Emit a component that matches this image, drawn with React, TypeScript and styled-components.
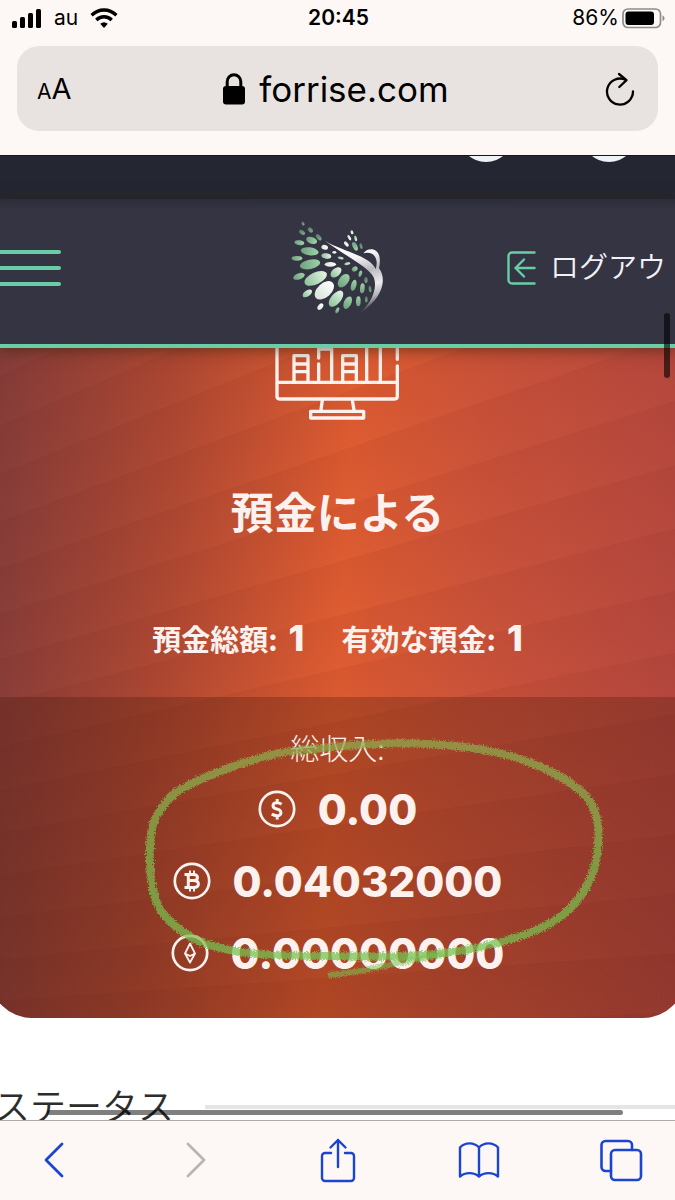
import React from "react";
import styled, { createGlobalStyle } from "styled-components";

const uiFont = `Inter, "Noto Sans CJK JP", sans-serif`;
const jpFont = `"Noto Sans CJK JP", "Noto Sans", sans-serif`;
const mint = "#69cda6";
const cream = "#fdf8f5";
const paper = "#fbf2ef";
const linkBlue = "#1c45cf";

const GlobalStyle = createGlobalStyle`
  * { box-sizing: border-box; }
  body { margin: 0; background: ${cream}; font-family: ${uiFont}; }
  button { appearance: none; border: 0; padding: 0; background: none; color: inherit; font: inherit; display: flex; align-items: center; justify-content: center; }
  svg { display: block; flex: none; }
`;

const Screen = styled.div`
  display: flex;
  flex-direction: column;
  height: 100vh;
  overflow: hidden;
  background: ${cream};
  color: #000;
`;

/* ---------- browser chrome, top ---------- */

const StatusBar = styled.header`
  display: grid;
  grid-template-columns: 1fr auto 1fr;
  align-items: center;
  height: 36px;
  padding: 0 10px 0 12px;
  font-size: 21px;
  line-height: 36px;
`;

const StatusGroup = styled.div<{ $end?: boolean; $gap: number }>`
  display: flex;
  align-items: center;
  gap: ${(p) => p.$gap}px;
  justify-content: ${(p) => (p.$end ? "flex-end" : "flex-start")};
`;

const Clock = styled.time`
  font-weight: 600;
`;

const AddressBar = styled.div`
  display: grid;
  grid-template-columns: 1fr auto 1fr;
  align-items: center;
  height: 85px;
  margin: 10px 17px 24px;
  padding: 0 23px 0 20px;
  border-radius: 22px;
  background: #e8e3e0;
`;

const TextSizeButton = styled.button`
  justify-self: start;
  && { align-items: baseline; }
  padding-top: 4px;
  line-height: 40px;
`;

const Letter = styled.span<{ $size: number }>`
  font-size: ${(p) => p.$size}px;
`;

const Domain = styled.div`
  display: flex;
  align-items: center;
  gap: 14px;
  font-size: 35px;
  line-height: 48px;
`;

const ReloadButton = styled.button`
  && { justify-self: end; }
`;

/* ---------- web page ---------- */

const Viewport = styled.main`
  position: relative;
  flex: 1;
  min-height: 0;
  overflow: hidden;
  background: #fff;
`;

const TopStrip = styled.div`
  display: flex;
  justify-content: flex-end;
  align-items: flex-start;
  gap: 69px;
  height: 44px;
  padding-right: 39px;
  overflow: hidden;
  background: linear-gradient(#242631 75%, #272733);
  border-top: 1px solid #14161d;
`;

const RoundLink = styled.a`
  width: 54px;
  height: 54px;
  margin-top: -48px;
  border-radius: 50%;
  background: #eef3f6;
`;

const NavBar = styled.nav`
  position: relative;
  z-index: 1;
  display: grid;
  grid-template-columns: 1fr auto 1fr;
  align-items: center;
  height: 149px;
  padding-bottom: 8px;
  border-bottom: 4px solid ${mint};
  background: linear-gradient(#2b2c39, #343443 10px);
  box-shadow: 0 2px 14px rgba(40, 30, 10, 0.55);
`;

const MenuButton = styled.button`
  justify-self: start;
  && { flex-direction: column; align-items: flex-start; }
  gap: 12px;
`;

const MenuLine = styled.span`
  width: 61px;
  height: 4px;
  border-radius: 0 2px 2px 0;
  background: ${mint};
`;

const LogoutLink = styled.a`
  justify-self: end;
  display: flex;
  align-items: center;
  gap: 14px;
  margin-right: -20px;
  color: #f1f1f6;
  font-family: ${jpFont};
  font-size: 29px;
  font-weight: 350;
  line-height: 40px;
  text-decoration: none;
  white-space: nowrap;
`;

const LogoutText = styled.span`
  padding-bottom: 5px;
`;

const Card = styled.section`
  margin: 0 -10px;
  overflow: hidden;
  border-radius: 0 0 42px 42px;
  color: ${paper};
  font-family: ${jpFont};
  background:
    repeating-conic-gradient(from 62deg at -1567px 763px, rgba(90, 10, 10, 0.06) 0deg, rgba(90, 10, 10, 0) 1.5deg),
    linear-gradient(93deg, #833c3a 0%, #ad4833 25%, #de5c31 50%, #c9523a 70%, #b2463f 100%);
`;

const CardTop = styled.div`
  display: flex;
  flex-direction: column;
  align-items: center;
  padding-bottom: 35px;
`;

const CardTitle = styled.h1`
  margin: 60px 0 0;
  font-size: 43px;
  font-weight: 700;
  line-height: 60px;
`;

const Stats = styled.dl`
  display: flex;
  gap: 37px;
  margin: 74px 0 0;
  line-height: 48px;
`;

const Stat = styled.div`
  display: flex;
  align-items: baseline;
  gap: 11px;
`;

const StatLabel = styled.dt`
  font-size: 29px;
  font-weight: 700;
`;

const StatValue = styled.dd`
  margin: 0;
  font-family: ${uiFont};
  font-size: 36px;
  font-weight: 800;
`;

const Income = styled.div`
  position: relative;
  padding: 30px 0 29px;
  background: rgba(65, 20, 8, 0.28);
  text-align: center;
`;

const IncomeLabel = styled.h2`
  margin: 0 0 6px;
  font-size: 29px;
  font-weight: 300;
  line-height: 40px;
`;

const IncomeList = styled.ul`
  margin: 0;
  padding: 0;
  list-style: none;
`;

const IncomeRow = styled.li`
  display: flex;
  align-items: center;
  justify-content: center;
  gap: 22px;
  height: 72px;
  font-family: ${uiFont};
  font-size: 42px;
  font-weight: 800;
`;

const PencilMark = styled.svg`
  position: absolute;
  top: 33px;
  left: calc(50% - 207px);
  pointer-events: none;
`;

const StatusHeading = styled.h2`
  display: flex;
  align-items: flex-end;
  gap: 31px;
  margin: 58px 0 0 -6px;
  color: #2d2d2d;
  font-family: ${jpFont};
  font-size: 36px;
  font-weight: 350;
  line-height: 56px;
  white-space: nowrap;

  &::after {
    content: "";
    flex: 1;
    height: 4px;
    margin-bottom: 23px;
    background: #e5e5e5;
  }
`;

const VerticalThumb = styled.div`
  position: absolute;
  z-index: 2;
  top: 158px;
  right: 5px;
  width: 6px;
  height: 65px;
  border-radius: 3px;
  background: rgba(0, 0, 0, 0.6);
`;

const HorizontalThumb = styled.div`
  position: absolute;
  bottom: 5px;
  left: 7%;
  right: 52px;
  height: 5px;
  border-radius: 3px;
  background: rgba(0, 0, 0, 0.5);
`;

/* ---------- browser chrome, bottom ---------- */

const Toolbar = styled.footer`
  display: flex;
  align-items: center;
  justify-content: space-between;
  height: 80px;
  padding: 0 32px 2px;
  border-top: 1px solid #aeaaa8;
  background: ${cream};
`;

const ToolButton = styled.button`
  width: 44px;
  height: 48px;
  color: ${linkBlue};
  &:disabled { color: #b9b5b3; }
`;

/* ---------- drawings ---------- */

const SignalIcon = () => (
  <svg width="30" height="19" viewBox="0 0 30 19">
    <rect x="0" y="12" width="5" height="7" rx="1.5" />
    <rect x="8" y="8" width="5" height="11" rx="1.5" />
    <rect x="16" y="4" width="5" height="15" rx="1.5" />
    <rect x="24" y="0" width="5" height="19" rx="1.5" />
  </svg>
);

const WifiIcon = () => (
  <svg width="28" height="20" viewBox="0 0 28 20" fill="none" stroke="#000" strokeWidth="3.4">
    <path d="M1.6 7.2Q7 2 14 2t12.400 5.200" />
    <path d="M6.300 12Q9.500 8.800 14 8.800T21.700 12" />
    <path d="M14 20l-3.800-4.200Q14 12.600 17.800 15.800Z" fill="#000" stroke="none" />
  </svg>
);

const BatteryIcon = () => (
  <svg width="43" height="21" viewBox="0 0 43 21">
    <rect x="1" y="1" width="37.500" height="18.500" rx="5" fill="none" stroke="#8f8b89" strokeWidth="1.700" />
    <rect x="3.500" y="3.500" width="28.500" height="13.500" rx="3" />
    <path d="M40.500 7.200q2 1 2 3t-2 3z" fill="#8f8b89" />
  </svg>
);

const LockIcon = () => (
  <svg width="22" height="32" viewBox="0 0 22 32">
    <rect x="0" y="13" width="22" height="18.500" rx="3" />
    <path d="M4.200 15V8.500a6.800 6.800 0 0 1 13.600 0V15" fill="none" stroke="#000" strokeWidth="3" />
  </svg>
);

const ReloadIcon = () => (
  <svg width="30" height="34" viewBox="0 0 30 34" fill="none" stroke="#000" strokeWidth="2.300" strokeLinecap="round" strokeLinejoin="round">
    <path d="M28 19.500A13 13 0 1 1 20.500 7.800" />
    <path d="M14 2l7.500 6.200-7.200 6.800" />
  </svg>
);

type Seed = [number, number, number, number, number, string];
const seeds: Seed[] = [
  [98, 71, 6, 4, 60, "d"], [95, 97, 10, 6, 35, "d"], [120, 90, 9, 6, 50, "d"], [145, 112, 11, 6, 50, "d"],
  [87, 128, 15, 7, 10, "g"], [124, 121, 17, 10, 20, "g"], [118, 154, 27, 12, 8, "g"], [80, 175, 16, 7, 0, "g"],
  [163, 142, 10, 7, 15, "w"], [168, 168, 15, 8, 10, "l"], [192, 157, 6, 4, 0, "w"], [180, 193, 17, 7, 0, "w"],
  [211, 174, 9, 4, 10, "l"], [231, 191, 9, 4, -10, "l"], [119, 193, 31, 14, -12, "g"], [86, 229, 18, 9, -20, "g"],
  [136, 235, 36, 18, -25, "l"], [197, 217, 19, 12, -40, "l"], [111, 280, 16, 9, -35, "l"], [162, 271, 34, 21, -42, "w"],
  [220, 242, 23, 14, -52, "g"], [253, 207, 9, 7, -30, "g"], [197, 296, 29, 15, -50, "l"], [150, 320, 11, 7, -50, "w"],
  [201, 331, 9, 5, -65, "g"], [232, 308, 20, 11, -65, "g"], [250, 256, 17, 8, -75, "g"], [270, 221, 10, 5, -75, "g"],
  [264, 304, 15, 7, -88, "g"], [276, 265, 15, 7, -85, "g"], [287, 240, 9, 5, 90, "d"], [288, 298, 9, 4, 90, "d"],
  [299, 267, 10, 4, 85, "d"], [245, 97, 6, 4, 70, "w"], [237, 113, 9, 4, 60, "w"], [228, 132, 9, 5, 50, "w"],
  [254, 139, 14, 7, 65, "g"], [256, 115, 9, 4, 75, "l"], [272, 138, 9, 4, 75, "d"],
];

const BirdLogo = () => (
  <svg width="94" height="93" viewBox="62 63 282 279" role="img" aria-label="ForRise">
    <defs>
      <linearGradient id="g"><stop stopColor="#6f9f80" /><stop offset="1" stopColor="#9ed3a6" /></linearGradient>
      <linearGradient id="l"><stop stopColor="#8ec29a" /><stop offset="1" stopColor="#e4f3e4" /></linearGradient>
      <linearGradient id="w"><stop stopColor="#d5e4d8" /><stop offset="1" stopColor="#fff" /></linearGradient>
      <linearGradient id="d"><stop stopColor="#557a68" /><stop offset="1" stopColor="#7eab8b" /></linearGradient>
      <linearGradient id="body" gradientUnits="userSpaceOnUse" x1="240" y1="120" x2="300" y2="335">
        <stop stopColor="#fff" /><stop offset=".25" stopColor="#f4f4f6" /><stop offset=".45" stopColor="#b9b9c0" />
        <stop offset=".65" stopColor="#ececee" /><stop offset=".8" stopColor="#b5b5bb" /><stop offset="1" stopColor="#343443" />
      </linearGradient>
    </defs>
    {seeds.map(([x, y, rx, ry, turn, tone]) => (
      <ellipse key={`${x}-${y}`} cx={x} cy={y} rx={rx} ry={ry} fill={`url(#${tone})`} transform={`rotate(${turn} ${x} ${y})`} />
    ))}
    <path fill="url(#body)" d="M163 122C195 142 250 156 290 180C303 188 311 197 316 207C320 195 321 182 314 170C306 157 292 156 279 160C286 150 298 145 311 149C330 157 331 180 326 205C349 235 341 292 270 338C310 300 322 258 309 230C294 203 240 176 163 122Z" />
  </svg>
);

const LogoutIcon = () => (
  <svg width="29" height="34" viewBox="0 0 29 34" fill="none" stroke={mint} strokeWidth="2.400" strokeLinecap="round" strokeLinejoin="round">
    <path d="M27.500 1.500H5a3.500 3.500 0 0 0-3.500 3.500v24A3.500 3.500 0 0 0 5 32.500h22.500" />
    <path d="M27.500 17H8.500M17 8.500L8.500 17l8.500 8.500" />
  </svg>
);

const MonitorIcon = () => (
  <svg width="126" height="72" viewBox="104 54 378 216" fill="none" stroke={paper} strokeWidth="10" strokeLinecap="round" strokeLinejoin="round">
    <path d="M110 40V199q0 8 8 8H463q8 0 8-8V108M471 88V40M110 157H471" />
    <path d="M161 157V77H203V157M161 102H203M161 125H203" />
    <path d="M307 157V77H348V157M307 102H348M307 125H348" />
    <path d="M235 40V84M235 102V157M240 57H274V157M379 40V157M420 40V157" />
    <path d="M246 210L242 240M336 210L341 240M211 244H370V264H211Z" />
  </svg>
);

const CoinIcon = ({ children }: { children: React.ReactNode }) => (
  <svg width="38" height="38" viewBox="0 0 38 38" fill="none" stroke={paper} strokeWidth="2.700" strokeLinejoin="round">
    <circle cx="19" cy="19" r="17.200" />
    {children}
  </svg>
);

const Dollar = () => (
  <CoinIcon>
    <path d="M23.600 14.200Q21.500 12.700 19 12.700C13.800 12.700 13.600 18 18.800 19S24.600 25.800 19 25.800Q16 25.800 13.800 24M19.200 9v4M19.200 26v3.500" strokeWidth="3" />
  </CoinIcon>
);

const Bitcoin = () => (
  <CoinIcon>
    <path d="M11.500 12.400H20.500C26 12.400 25.600 18.600 20.500 18.600H16M20.500 18.600C27 18.600 27 25.600 20.800 25.600H11.500M15.300 12.400V25.600" strokeWidth="3" />
    <path d="M17 8.500V12M21 8.500V12M17 26V29.500M21 26V29.500" strokeWidth="2" />
  </CoinIcon>
);

const Ether = () => (
  <CoinIcon>
    <path d="M19 9.500L24 19.500L19 28.500L14 19.500ZM14 19.500L19 22L24 19.500" strokeWidth="1.800" />
  </CoinIcon>
);

const PencilLoop = () => (
  <PencilMark width="490" height="260" viewBox="130 730 490 260" fill="none" strokeLinecap="round" aria-hidden="true">
    <defs>
      <filter id="crayon" x="-5%" y="-5%" width="110%" height="110%">
        <feTurbulence type="fractalNoise" baseFrequency="0.7" numOctaves="2" seed="4" result="noise" />
        <feDisplacementMap in="SourceGraphic" in2="noise" scale="6" xChannelSelector="R" yChannelSelector="G" />
      </filter>
      <linearGradient id="pencil" gradientUnits="userSpaceOnUse" x1="0" y1="740" x2="0" y2="970">
        <stop stopColor="#8faa4d" /><stop offset=".6" stopColor="#7cba4c" /><stop offset="1" stopColor="#76c452" />
      </linearGradient>
    </defs>
    <g filter="url(#crayon)" stroke="url(#pencil)">
      <path opacity=".74" strokeWidth="8" d="M500 942C520 936 540 930 556 919C580 903 596 875 597 845C600 808 590 790 540 767C495 747 445 744 400 743C355 744 325 747 285 752C240 760 195 780 175 792C150 815 148 830 149 862C150 905 160 920 195 940C230 955 270 956 330 956C400 958 450 956 500 942" />
      <path opacity=".55" strokeWidth="6" d="M330 975C370 971 390 963 440 955" />
    </g>
  </PencilMark>
);

const toolStroke = { fill: "none", stroke: "currentColor", strokeLinecap: "round", strokeLinejoin: "round" } as const;

const BackIcon = () => (
  <svg width="20" height="36" viewBox="0 0 20 36" {...toolStroke} strokeWidth="2.800"><path d="M18 2L2 18l16 16" /></svg>
);
const ForwardIcon = () => (
  <svg width="20" height="36" viewBox="0 0 20 36" {...toolStroke} strokeWidth="2.800"><path d="M2 2l16 16L2 34" /></svg>
);
const ShareIcon = () => (
  <svg width="36" height="46" viewBox="0 0 36 46" {...toolStroke} strokeWidth="2.400">
    <path d="M11 16H5a3 3 0 0 0-3 3v22a3 3 0 0 0 3 3h26a3 3 0 0 0 3-3V19a3 3 0 0 0-3-3h-6M18 30V3M10.500 10.500L18 3l7.500 7.500" />
  </svg>
);
const BookIcon = () => (
  <svg width="42" height="38" viewBox="0 0 42 38" {...toolStroke} strokeWidth="2.400">
    <path d="M21 6.500C16 1 7 1 2 6.500V35.500C7 31 16 31 21 35.500C26 31 35 31 40 35.500V6.500C35 1 26 1 21 6.500V35" />
  </svg>
);
const TabsIcon = () => (
  <svg width="44" height="44" viewBox="0 0 44 44" {...toolStroke} strokeWidth="2.600">
    <rect x="12" y="12" width="30" height="30" rx="4" />
    <path d="M12 33H6.500a4 4 0 0 1-4-4V7a4 4 0 0 1 4-4H29a4 4 0 0 1 4 4v5" />
  </svg>
);

const incomes = [
  { icon: <Dollar />, amount: "0.00" },
  { icon: <Bitcoin />, amount: "0.04032000" },
  { icon: <Ether />, amount: "0.00000000" },
];

export default function App() {
  return (
    <Screen>
      <GlobalStyle />
      <StatusBar>
        <StatusGroup $gap={12}>
          <SignalIcon />
          <span>au</span>
          <WifiIcon />
        </StatusGroup>
        <Clock>20:45</Clock>
        <StatusGroup $gap={3} $end>
          <span>86%</span>
          <BatteryIcon />
        </StatusGroup>
      </StatusBar>
      <AddressBar>
        <TextSizeButton>
          <Letter $size={21}>A</Letter>
          <Letter $size={29}>A</Letter>
        </TextSizeButton>
        <Domain>
          <LockIcon />
          <span>forrise.com</span>
        </Domain>
        <ReloadButton aria-label="Reload"><ReloadIcon /></ReloadButton>
      </AddressBar>

      <Viewport>
        <TopStrip>
          <RoundLink href="#chat" aria-label="Chat" />
          <RoundLink href="#language" aria-label="Language" />
        </TopStrip>
        <NavBar>
          <MenuButton aria-label="Menu">
            <MenuLine />
            <MenuLine />
            <MenuLine />
          </MenuButton>
          <BirdLogo />
          <LogoutLink href="#logout">
            <LogoutIcon />
            <LogoutText>ログアウト</LogoutText>
          </LogoutLink>
        </NavBar>

        <Card>
          <CardTop>
            <MonitorIcon />
            <CardTitle>預金による</CardTitle>
            <Stats>
              <Stat>
                <StatLabel>預金総額:</StatLabel>
                <StatValue>1</StatValue>
              </Stat>
              <Stat>
                <StatLabel>有効な預金:</StatLabel>
                <StatValue>1</StatValue>
              </Stat>
            </Stats>
          </CardTop>
          <Income>
            <IncomeLabel>総収入:</IncomeLabel>
            <IncomeList>
              {incomes.map(({ icon, amount }) => (
                <IncomeRow key={amount}>
                  {icon}
                  <span>{amount}</span>
                </IncomeRow>
              ))}
            </IncomeList>
            <PencilLoop />
          </Income>
        </Card>

        <StatusHeading>ステータス</StatusHeading>
        <VerticalThumb />
        <HorizontalThumb />
      </Viewport>

      <Toolbar>
        <ToolButton aria-label="Back"><BackIcon /></ToolButton>
        <ToolButton aria-label="Forward" disabled><ForwardIcon /></ToolButton>
        <ToolButton aria-label="Share"><ShareIcon /></ToolButton>
        <ToolButton aria-label="Bookmarks"><BookIcon /></ToolButton>
        <ToolButton aria-label="Tabs"><TabsIcon /></ToolButton>
      </Toolbar>
    </Screen>
  );
}
